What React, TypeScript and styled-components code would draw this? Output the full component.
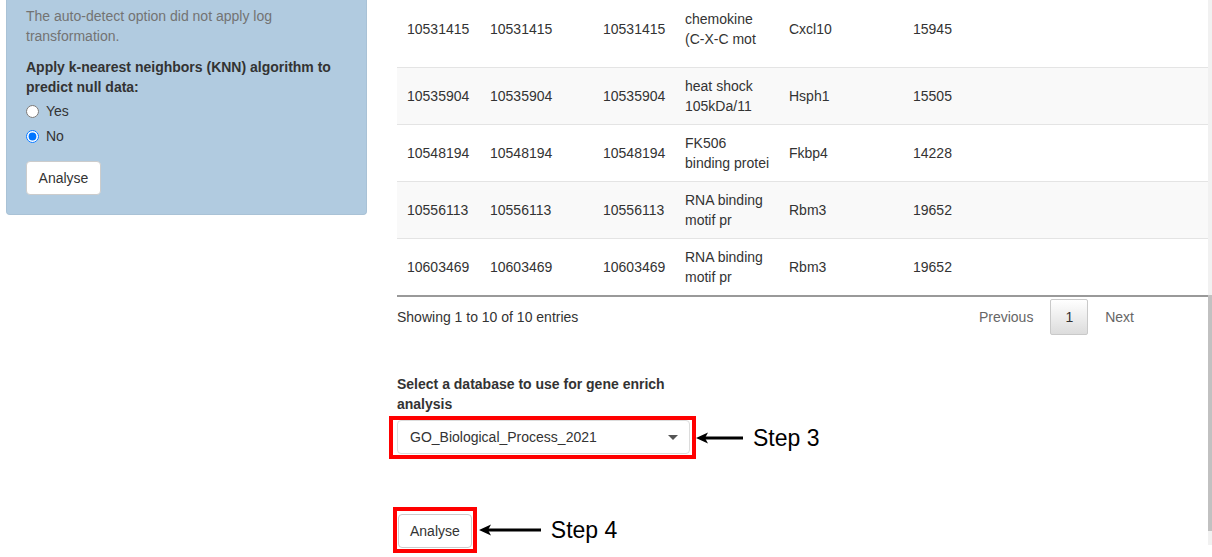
import React from "react";
import styled, { createGlobalStyle } from "styled-components";

const Global = createGlobalStyle`
  html, body { margin: 0; padding: 0; background: #ffffff; }
  body {
    font-family: "Liberation Sans", Arial, Helvetica, sans-serif;
    font-size: 14px;
    line-height: 20px;
    color: #333333;
  }
  * { box-sizing: border-box; }
`;

const Page = styled.div`
  display: flex;
  width: 1212px;
  height: 557px;
  overflow: hidden;
`;

const SideColumn = styled.div`
  width: 397px;
  flex: none;
  padding-left: 6px;
`;

const Well = styled.div`
  width: 361px;
  background: #b1cbe0;
  border: 1px solid #a9c2d6;
  border-top: none;
  border-radius: 0 0 4px 4px;
  padding: 6px 19px 19px 19px;
`;

const HelpText = styled.div`
  color: #737373;
  margin-bottom: 11px;
`;

const FieldLabel = styled.div<{ $width?: number; $gap?: number }>`
  font-weight: bold;
  color: #333333;
  margin-bottom: ${(p) => p.$gap ?? 4}px;
  ${(p) => (p.$width ? `width: ${p.$width}px;` : "")}
`;

const RadioGroup = styled.div`
  display: flex;
  flex-direction: column;
  gap: 5px;
`;

const RadioRow = styled.label`
  display: flex;
  align-items: center;
  height: 20px;
  cursor: pointer;
  input {
    margin: 0 7px 0 0;
    width: 13px;
    height: 13px;
    accent-color: #0075ff;
  }
`;

const Button = styled.button`
  font-family: "Liberation Sans", Arial, sans-serif;
  font-size: 14px;
  line-height: 20px;
  color: #333333;
  background: #ffffff;
  border: 1px solid #cccccc;
  border-radius: 4px;
  padding: 6px 11px;
  height: 34px;
`;

const WellButton = styled(Button)`
  margin-top: 15px;
  width: 75px;
`;

const Main = styled.div`
  width: 811px;
  flex: none;
  display: flex;
  flex-direction: column;
`;

const Table = styled.table`
  width: 811px;
  border-collapse: collapse;
  table-layout: fixed;
  border-bottom: 2px solid #999999;
`;

const Row = styled.tr<{ $striped?: boolean }>`
  background: ${(p) => (p.$striped ? "#f9f9f9" : "#ffffff")};
`;

const Cell = styled.td<{ $first?: boolean }>`
  padding: ${(p) => (p.$first ? "9px 8px 18px 10px" : "8px 8px 8px 10px")};
  border-top: ${(p) => (p.$first ? "none" : "1px solid #e4e4e4")};
  vertical-align: middle;
  color: #333333;
  text-align: left;
`;

const Footer = styled.div`
  display: flex;
  justify-content: space-between;
  align-items: flex-start;
  margin-right: 59px;
`;

const Info = styled.div`
  padding-top: 10px;
`;

const Pager = styled.div`
  display: flex;
  padding-top: 2px;
  gap: 2px;
`;

const PageButton = styled.span<{ $current?: boolean }>`
  padding: 7px 14px;
  border: 1px solid ${(p) => (p.$current ? "#c9c9c9" : "transparent")};
  border-radius: 2px;
  color: ${(p) => (p.$current ? "#333333" : "#666666")};
  background: ${(p) =>
    p.$current ? "linear-gradient(to bottom, #ffffff 0%, #dcdcdc 100%)" : "transparent"};
`;

const FormGroup = styled.div`
  margin-top: 39px;
`;

const AnnotatedRow = styled.div<{ $top?: number }>`
  display: flex;
  align-items: center;
  margin-top: ${(p) => p.$top ?? 0}px;
`;

const RedFrame = styled.div<{ $pad: string; $shift: number }>`
  border: 4px solid #ff0000;
  padding: ${(p) => p.$pad};
  margin-left: ${(p) => -p.$shift}px;
  display: flex;
`;

const SelectBox = styled.div`
  width: 293px;
  height: 34px;
  border: 1px solid #dcdcdc;
  border-radius: 4px;
  background: #ffffff;
  display: flex;
  align-items: center;
  justify-content: space-between;
  padding: 0 11px 0 12px;
`;

const Caret = styled.span`
  width: 0;
  height: 0;
  border-left: 5px solid transparent;
  border-right: 5px solid transparent;
  border-top: 5px solid #555555;
`;

const StepText = styled.span`
  font-family: "Liberation Sans", Arial, sans-serif;
  font-size: 23px;
  line-height: 26px;
  color: #000000;
  margin-left: 10px;
`;

const ArrowSvg = styled.svg<{ $gap: number }>`
  margin-left: ${(p) => p.$gap}px;
  flex: none;
`;

const ScrollTrack = styled.div`
  width: 4px;
  flex: none;
  display: flex;
  flex-direction: column;
`;

const TrackPart = styled.div<{ $h: number; $c: string }>`
  height: ${(p) => p.$h}px;
  background: ${(p) => p.$c};
`;

const Arrow = ({ width, gap }: { width: number; gap: number }) => (
  <ArrowSvg $gap={gap} width={width} height={14} viewBox={`0 0 ${width} 14`}>
    <line x1={9} y1={7} x2={width} y2={7} stroke="#000" strokeWidth={3} />
    <polygon points="0,7 12,1.5 9,7 12,12.5" fill="#000" />
  </ArrowSvg>
);

const rows = [
  ["10531415", "10531415", "10531415", "chemokine (C-X-C mot", "Cxcl10", "15945"],
  ["10535904", "10535904", "10535904", "heat shock 105kDa/11", "Hsph1", "15505"],
  ["10548194", "10548194", "10548194", "FK506 binding protei", "Fkbp4", "14228"],
  ["10556113", "10556113", "10556113", "RNA binding motif pr", "Rbm3", "19652"],
  ["10603469", "10603469", "10603469", "RNA binding motif pr", "Rbm3", "19652"],
];

const colWidths = [83, 113, 82, 104, 124, 305];

export default function App() {
  return (
    <>
      <Global />
      <Page>
        <SideColumn>
          <Well>
            <HelpText>The auto-detect option did not apply log transformation.</HelpText>
            <FieldLabel>Apply k-nearest neighbors (KNN) algorithm to predict null data:</FieldLabel>
            <RadioGroup>
              <RadioRow>
                <input type="radio" name="knn" value="yes" />
                Yes
              </RadioRow>
              <RadioRow>
                <input type="radio" name="knn" value="no" defaultChecked />
                No
              </RadioRow>
            </RadioGroup>
            <WellButton>Analyse</WellButton>
          </Well>
        </SideColumn>
        <Main>
          <Table>
            <colgroup>
              {colWidths.map((w, i) => (
                <col key={i} style={{ width: w }} />
              ))}
            </colgroup>
            <tbody>
              {rows.map((r, i) => (
                <Row key={i} $striped={i % 2 === 1}>
                  {r.map((c, j) => (
                    <Cell key={j} $first={i === 0}>
                      {c}
                    </Cell>
                  ))}
                </Row>
              ))}
            </tbody>
          </Table>
          <Footer>
            <Info>Showing 1 to 10 of 10 entries</Info>
            <Pager>
              <PageButton>Previous</PageButton>
              <PageButton $current>1</PageButton>
              <PageButton>Next</PageButton>
            </Pager>
          </Footer>
          <FormGroup>
            <FieldLabel $width={300} $gap={2}>
              Select a database to use for gene enrich analysis
            </FieldLabel>
            <AnnotatedRow>
              <RedFrame $pad="0 2px 1px 4px" $shift={8}>
                <SelectBox>
                  <span>GO_Biological_Process_2021</span>
                  <Caret />
                </SelectBox>
              </RedFrame>
              <Arrow width={47} gap={0} />
              <StepText>Step 3</StepText>
            </AnnotatedRow>
          </FormGroup>
          <AnnotatedRow $top={48}>
            <RedFrame $pad="3px 1px 1px 1px" $shift={4}>
              <Button>Analyse</Button>
            </RedFrame>
            <Arrow width={62} gap={2} />
            <StepText>Step 4</StepText>
          </AnnotatedRow>
        </Main>
        <ScrollTrack>
          <TrackPart $h={295} $c="#f1f1f1" />
          <TrackPart $h={236} $c="#c1c1c1" />
          <TrackPart $h={14} $c="#f1f1f1" />
        </ScrollTrack>
      </Page>
    </>
  );
}
